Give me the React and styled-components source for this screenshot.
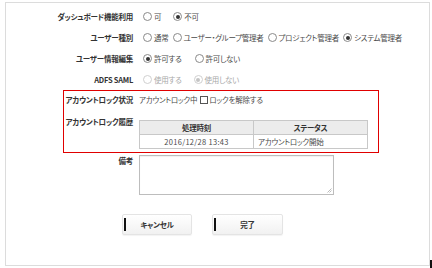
import React from 'react';
import styled, { createGlobalStyle, css } from 'styled-components';

const GlobalStyle = createGlobalStyle`
  html, body {
    margin: 0;
    padding: 0;
    background: #fff;
  }
  body {
    width: 432px;
    height: 268px;
    overflow: hidden;
    position: relative;
    font-family: "Noto Sans CJK JP", "Liberation Sans", sans-serif;
    font-size: 7.5px;
    letter-spacing: -0.25px;
    font-feature-settings: "palt";
    color: #333;
  }
`;

const Panel = styled.div`
  box-sizing: border-box;
  margin: 2px 0 0 5px;
  width: 425px;
  height: 264px;
  border: 1px solid #dcdcdc;
  padding-top: 3px;
`;

const FormRow = styled.div`
  display: grid;
  grid-template-columns: ${(p) => p.$labelWidth || 127}px 1fr;
  column-gap: 6px;
  align-items: ${(p) => (p.$top ? 'start' : 'center')};
  height: ${(p) => (p.$height ? `${p.$height}px` : 'auto')};
  margin-top: ${(p) => p.$mt || 0}px;
`;

const Label = styled.div`
  display: flex;
  justify-content: flex-end;
  font-weight: bold;
  line-height: 12px;
  white-space: nowrap;
  color: #333;
`;

const Value = styled.div`
  display: flex;
  align-items: center;
  white-space: nowrap;
  line-height: 12px;
  color: ${(p) => (p.$disabled ? '#a8a8a8' : '#4a4a4a')};
`;

const Option = styled.label`
  display: inline-flex;
  align-items: center;
  margin-right: ${(p) => p.$gap}px;
`;

const Radio = styled.span`
  box-sizing: border-box;
  width: 9px;
  height: 9px;
  border-radius: 50%;
  margin: 0 2px 0 4px;
  border: 1px solid ${(p) => (p.$disabled ? '#d0d0d0' : '#8a8a8a')};
  background: #fff;
  position: relative;
  ${(p) =>
    p.$checked &&
    css`
      &::after {
        content: '';
        position: absolute;
        left: 1.5px;
        top: 1.5px;
        width: 4px;
        height: 4px;
        border-radius: 50%;
        background: ${p.$disabled ? '#c4c4c4' : '#333'};
      }
    `}
`;

const Checkbox = styled.span`
  box-sizing: border-box;
  width: 8px;
  height: 8px;
  border: 1px solid #555;
  background: #fff;
  margin: 0 1px 0 3px;
`;

const LockBox = styled.div`
  box-sizing: border-box;
  margin: 0 0 0 57px;
  width: 316px;
  border: 1px solid #e00000;
  padding: 0 0 3px;
`;

const Table = styled.table`
  border-collapse: collapse;
  width: 229px;
  margin-top: 4px;
  font-size: 7.5px;
`;

const Th = styled.th`
  background: #ececec;
  border: 1px solid #c8c8c8;
  height: 13px;
  padding: 0;
  font-weight: bold;
  color: #333;
  text-align: center;
  width: ${(p) => p.$w}px;
`;

const Td = styled.td`
  border: 1px solid #c8c8c8;
  height: 13px;
  padding: 0 4px;
  color: #4a4a4a;
  letter-spacing: ${(p) => (p.$wide ? '0.3px' : 'inherit')};
  text-align: ${(p) => p.$align || 'left'};
`;

const Memo = styled.div`
  box-sizing: border-box;
  width: 195px;
  height: 40px;
  border: 1px solid #bdbdbd;
  box-shadow: inset 0 1px 1px rgba(0, 0, 0, 0.06);
  position: relative;
`;

const Grip = styled.svg`
  position: absolute;
  right: 1px;
  bottom: 1px;
`;

const Buttons = styled.div`
  display: flex;
  gap: 20px;
  margin: 19px 0 0 116px;
`;

const Button = styled.button`
  box-sizing: border-box;
  width: ${(p) => p.$w}px;
  height: 21px;
  border: 1px solid #e4e4e4;
  border-radius: 2px;
  background: linear-gradient(#ffffff, #f1f1f1);
  box-shadow: 0 1px 1px rgba(0, 0, 0, 0.05);
  font-family: inherit;
  font-size: 7.5px;
  letter-spacing: -0.25px;
  font-feature-settings: "palt";
  font-weight: bold;
  color: #333;
  position: relative;
  padding: 0;

  &::before {
    content: '';
    position: absolute;
    left: 1px;
    top: 3px;
    width: 2px;
    height: 13px;
    background: #111;
  }
`;

const Corner = styled.div`
  position: absolute;
  right: 0;
  bottom: 0;
  width: 2px;
  height: 8px;
  background: #111;
`;

const RadioOption = ({ label, checked, disabled, gap }) => (
  <Option $gap={gap}>
    <Radio $checked={checked} $disabled={disabled} />
    {label}
  </Option>
);

const App = () => (
  <>
    <GlobalStyle />
    <Panel>
      <FormRow $height={21}>
        <Label>ダッシュボード機能利用</Label>
        <Value>
          <RadioOption label="可" gap={8} />
          <RadioOption label="不可" checked gap={0} />
        </Value>
      </FormRow>
      <FormRow $height={21}>
        <Label>ユーザー種別</Label>
        <Value>
          <RadioOption label="通常" gap={0} />
          <RadioOption label="ユーザー・グループ管理者" gap={0} />
          <RadioOption label="プロジェクト管理者" gap={0} />
          <RadioOption label="システム管理者" checked gap={0} />
        </Value>
      </FormRow>
      <FormRow $height={21}>
        <Label>ユーザー情報編集</Label>
        <Value>
          <RadioOption label="許可する" checked gap={9} />
          <RadioOption label="許可しない" gap={0} />
        </Value>
      </FormRow>
      <FormRow $height={21}>
        <Label>ADFS SAML</Label>
        <Value $disabled>
          <RadioOption label="使用する" disabled gap={8} />
          <RadioOption label="使用しない" checked disabled gap={0} />
        </Value>
      </FormRow>

      <LockBox>
        <FormRow $labelWidth={69} $height={17}>
          <Label>アカウントロック状況</Label>
          <Value>
            アカウントロック中
            <Checkbox />
            ロックを解除する
          </Value>
        </FormRow>
        <FormRow $labelWidth={69} $top $mt={8}>
          <Label>アカウントロック履歴</Label>
          <Table>
            <thead>
              <tr>
                <Th $w={113}>処理時刻</Th>
                <Th>ステータス</Th>
              </tr>
            </thead>
            <tbody>
              <tr>
                <Td $align="center" $wide>2016/12/28 13:43</Td>
                <Td>アカウントロック開始</Td>
              </tr>
            </tbody>
          </Table>
        </FormRow>
      </LockBox>

      <FormRow $top $mt={2}>
        <Label>備考</Label>
        <Memo>
          <Grip width="5" height="5" viewBox="0 0 5 5">
            <path d="M4.5 0.5 L0.5 4.5 M4.5 2.5 L2.5 4.5" stroke="#aaa" strokeWidth="0.8" />
          </Grip>
        </Memo>
      </FormRow>

      <Buttons>
        <Button $w={70}>キャンセル</Button>
        <Button $w={71}>完了</Button>
      </Buttons>
    </Panel>
    <Corner />
  </>
);

export default App;
